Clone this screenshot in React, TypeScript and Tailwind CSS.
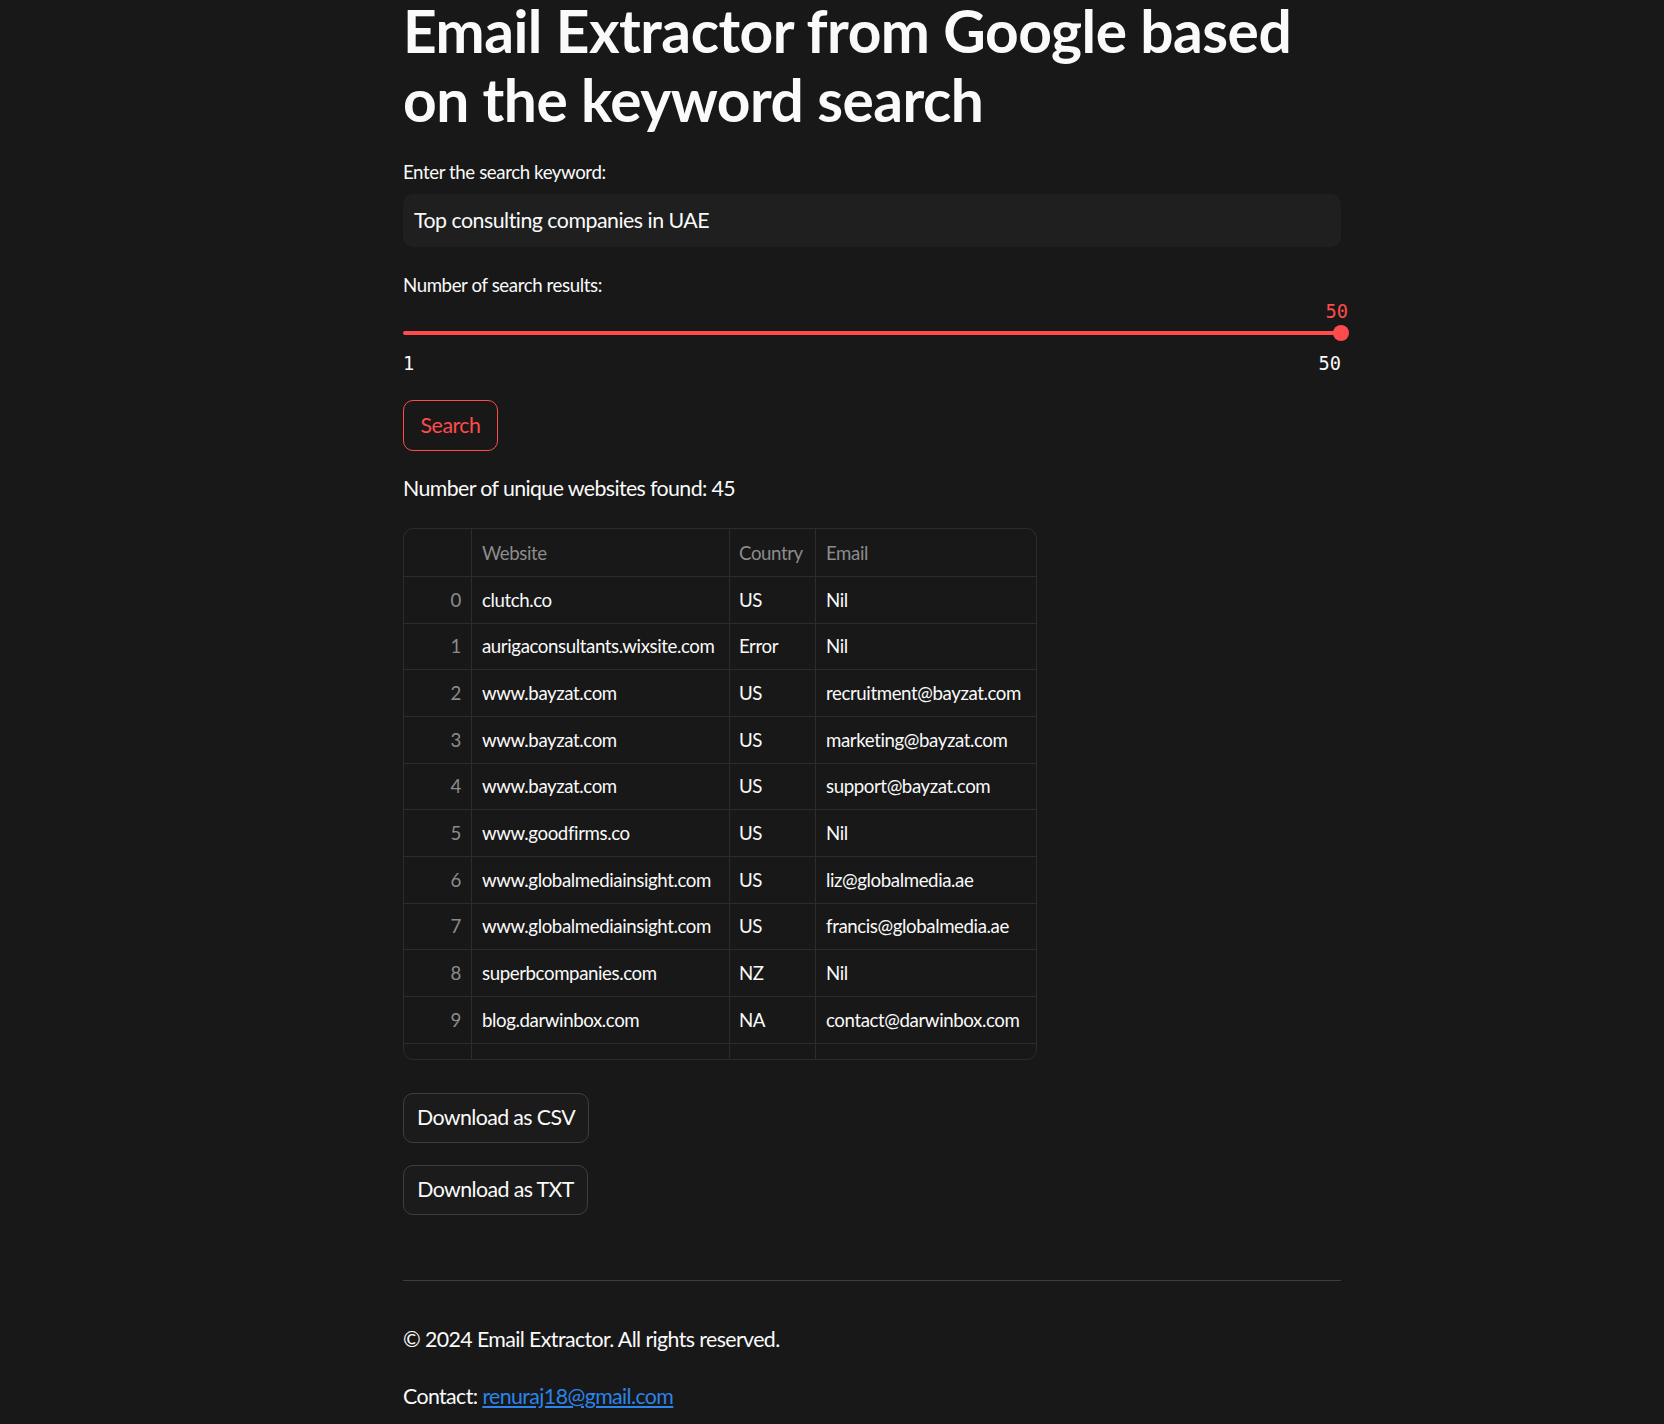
import React from "react";

const rows: [string, string, string, string][] = [
  ["0", "clutch.co", "US", "Nil"],
  ["1", "aurigaconsultants.wixsite.com", "Error", "Nil"],
  ["2", "www.bayzat.com", "US", "recruitment@bayzat.com"],
  ["3", "www.bayzat.com", "US", "marketing@bayzat.com"],
  ["4", "www.bayzat.com", "US", "support@bayzat.com"],
  ["5", "www.goodfirms.co", "US", "Nil"],
  ["6", "www.globalmediainsight.com", "US", "liz@globalmedia.ae"],
  ["7", "www.globalmediainsight.com", "US", "francis@globalmedia.ae"],
  ["8", "superbcompanies.com", "NZ", "Nil"],
  ["9", "blog.darwinbox.com", "NA", "contact@darwinbox.com"],
  ["10", "www.kompass.com", "US", "info@kompass.com"],
];

export default function App() {
  return (
    <div
      className="h-[1424px] w-full overflow-hidden bg-[#181818] text-[#fafafa]"
      style={{ fontFamily: "Lato, 'Noto Sans', sans-serif" }}
    >
      <div className="ml-[403px] w-[938px] flex flex-col">
        <h1 className="mt-[-4px] text-[58.67px] leading-[69px] font-bold tracking-[-0.5px]">
          Email Extractor from Google based on the keyword search
        </h1>

        <div className="mt-[26px] text-[18.67px] leading-[24px] tracking-[-0.4px]">Enter the search keyword:</div>
        <div className="mt-[10px] h-[53px] rounded-[10px] bg-[#1f1f1f] flex items-center px-[11px] text-[21.33px] tracking-[-0.5px]">
          Top consulting companies in UAE
        </div>

        <div className="mt-[25.5px] text-[18.67px] leading-[24px] tracking-[-0.4px]">Number of search results:</div>
        <div
          className="mt-[3.5px] flex justify-end h-[24px] text-[18.67px] leading-[24px] text-[#ff4b4b]"
          style={{ fontFamily: "'DejaVu Sans Mono', monospace" }}
        >
          <span className="mr-[-7px]">50</span>
        </div>
        <div className="mt-[1px] h-[16px] relative flex items-center">
          <div className="h-[4px] w-full rounded-full bg-[#ff4b4b]" />
          <div className="absolute right-[-8px] top-0 h-[16px] w-[16px] rounded-full bg-[#ff4b4b]" />
        </div>
        <div
          className="mt-[11px] flex justify-between text-[18.67px] leading-[24px]"
          style={{ fontFamily: "'DejaVu Sans Mono', monospace" }}
        >
          <span>1</span>
          <span>50</span>
        </div>

        <div className="mt-[24px]">
          <button className="h-[51px] w-[95px] rounded-[10px] border border-[#ff4b4b] text-[#ff4b4b] text-[21.33px] tracking-[-0.5px] flex items-center justify-center">
            Search
          </button>
        </div>

        <div className="mt-[22px] text-[21.33px] leading-[30px] tracking-[-0.6px]">Number of unique websites found: 45</div>

        <div className="mt-[25px] w-[634px] h-[532px] rounded-[10px] border border-[#2c2c2c] overflow-hidden text-[18.67px] tracking-[-0.4px]">
          <div className="flex h-[48px] border-b border-[#2c2c2c] text-[#8c8c8c]">
            <div className="w-[68px] shrink-0 border-r border-[#2c2c2c]" />
            <div className="w-[258px] shrink-0 border-r border-[#2c2c2c] flex items-center px-[10px]">Website</div>
            <div className="w-[86px] shrink-0 border-r border-[#2c2c2c] flex items-center px-[9px] overflow-hidden">Country</div>
            <div className="flex-1 flex items-center px-[10px]">Email</div>
          </div>
          {rows.map((r) => (
            <div key={r[0]} className="flex h-[46.67px] border-b border-[#2c2c2c] shrink-0">
              <div className="w-[68px] shrink-0 border-r border-[#2c2c2c] flex items-center justify-end px-[10px] text-[#8c8c8c]">
                {r[0]}
              </div>
              <div className="w-[258px] shrink-0 border-r border-[#2c2c2c] flex items-center px-[10px] whitespace-nowrap overflow-hidden">
                {r[1]}
              </div>
              <div className="w-[86px] shrink-0 border-r border-[#2c2c2c] flex items-center px-[9px] overflow-hidden">{r[2]}</div>
              <div className="flex-1 min-w-0 flex items-center px-[10px] whitespace-nowrap overflow-hidden">{r[3]}</div>
            </div>
          ))}
        </div>

        <div className="mt-[33px]">
          <button className="h-[50px] w-[186px] rounded-[10px] border border-[#3e3e3e] bg-[#1b1b1b] text-[21.33px] tracking-[-0.6px] flex items-center justify-center">
            Download as CSV
          </button>
        </div>
        <div className="mt-[22px]">
          <button className="h-[50px] w-[185px] rounded-[10px] border border-[#3e3e3e] bg-[#1b1b1b] text-[21.33px] tracking-[-0.6px] flex items-center justify-center">
            Download as TXT
          </button>
        </div>

        <div className="mt-[65px] h-[1px] bg-[#3d3d3d]" />

        <div className="mt-[43px] text-[21.33px] leading-[30px] tracking-[-0.6px]">© 2024 Email Extractor. All rights reserved.</div>
        <div className="mt-[27px] text-[21.33px] leading-[30px] tracking-[-0.6px]">
          Contact:{" "}
          <a href="#" className="text-[#2b84ea] underline">
            renuraj18@gmail.com
          </a>
        </div>
      </div>
    </div>
  );
}
